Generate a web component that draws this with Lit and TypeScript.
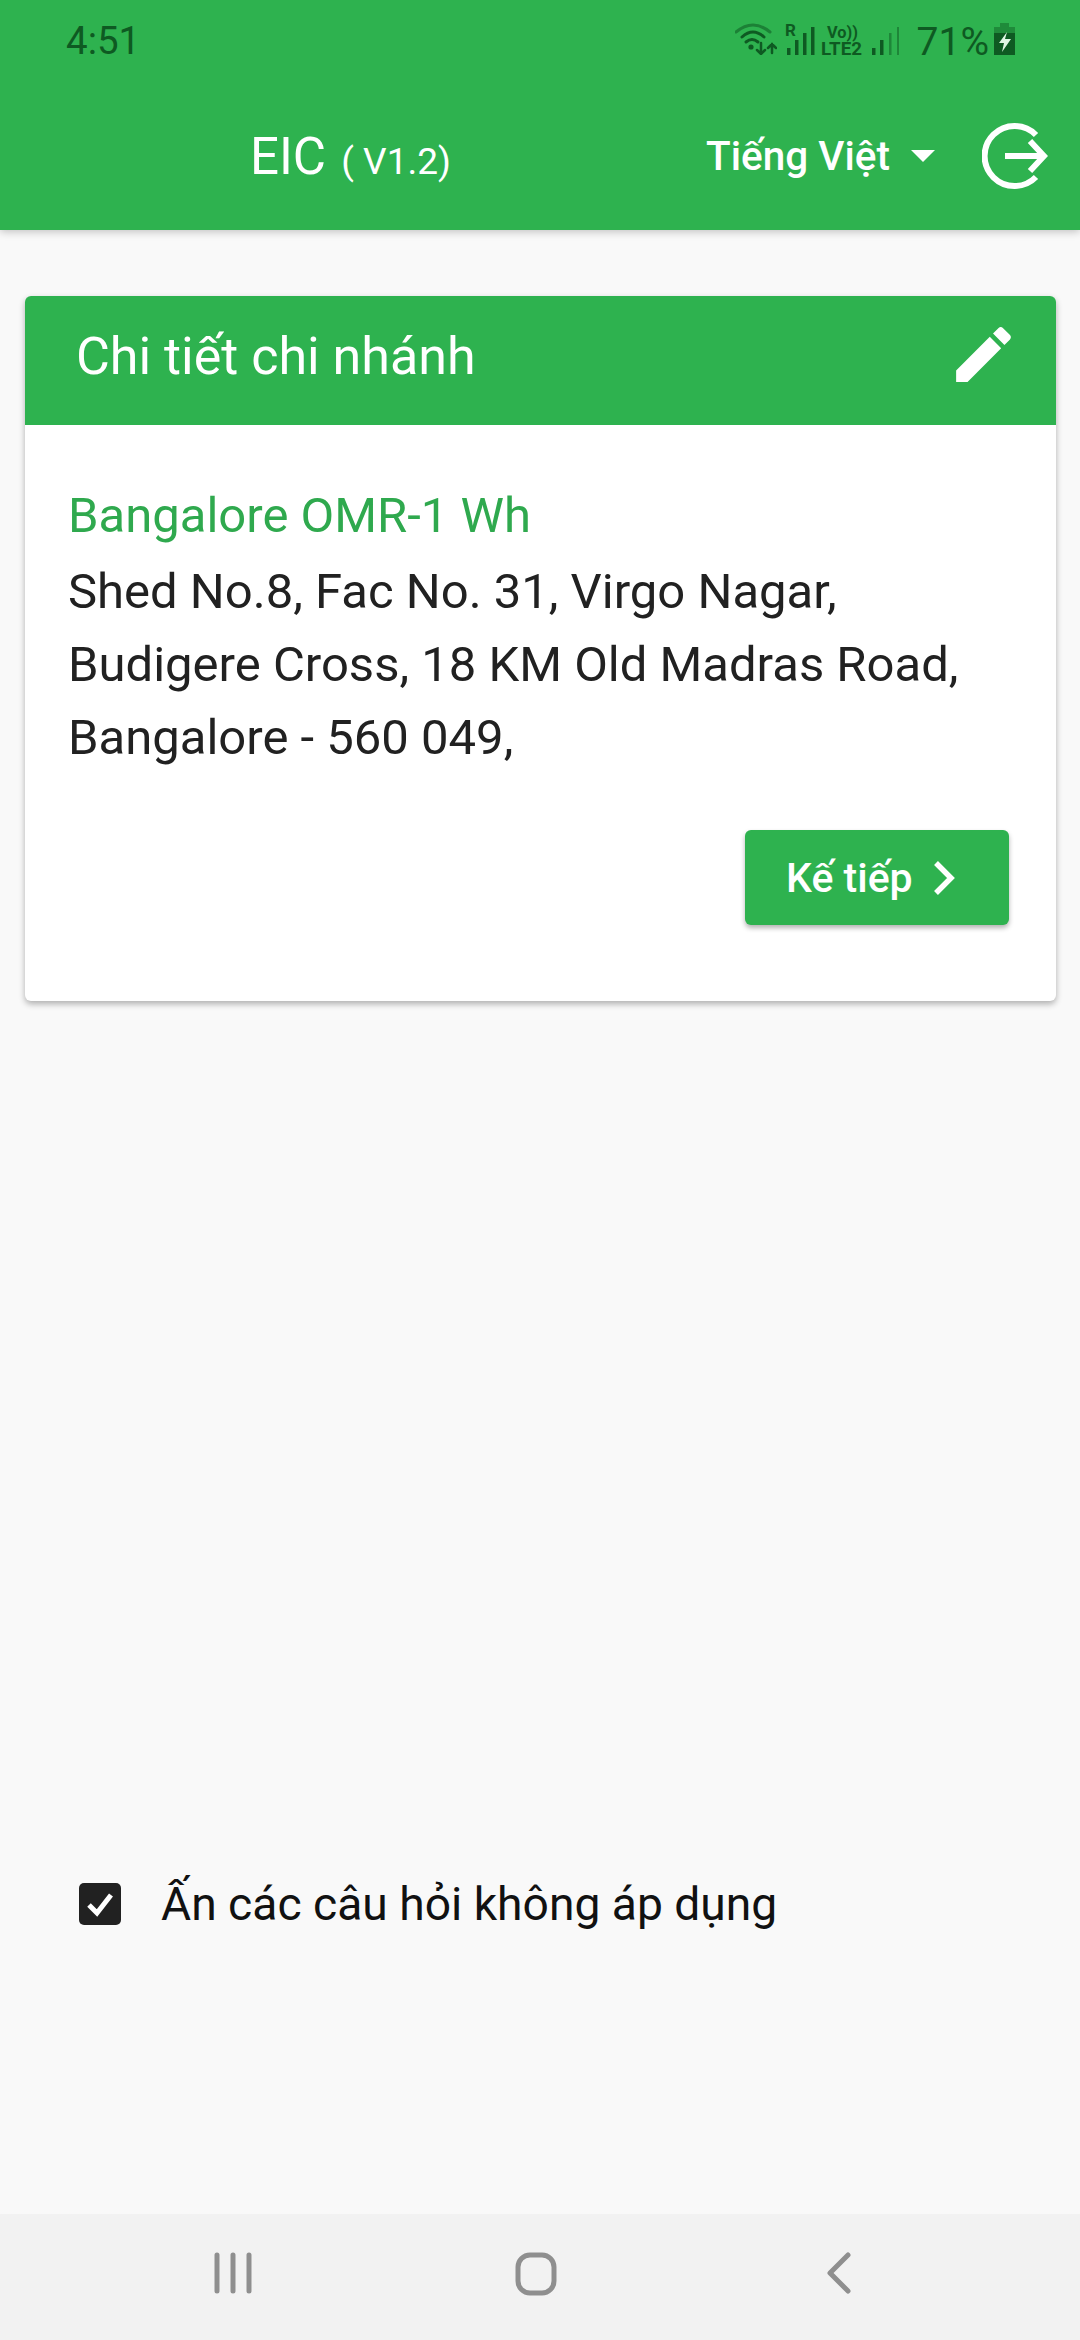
import { LitElement, html, css } from "lit";
import { customElement } from "lit/decorators.js";

@customElement("app-root")
export class AppRoot extends LitElement {
  static styles = css`
    :host { display: block; width: 1080px; height: 2340px; font-family: Roboto, "Liberation Sans", sans-serif; background: #f9f9f9; }
    * { box-sizing: border-box; }
    .page { height: 2340px; display: flex; flex-direction: column; }
    .top { height: 230px; background: #2eb24f; box-shadow: 0 2px 8px rgba(0,0,0,.22); display: flex; flex-direction: column; position: relative; }
    .status { height: 82px; display: flex; align-items: center; padding: 0 65px 0 66px; color: #0e5a22; }
    .time { font-size: 38.5px; line-height: 82px; }
    .sicons { margin-left: auto; margin-bottom: 4px; height: 32px; display: flex; align-items: flex-end; }
    .sicons svg { display: block; flex: none; }
    .sicons svg.tall { margin-bottom: -5px; }
    .wifi { margin-right: 8px; }
    .sicons svg.lte { margin-left: 4px; margin-right: 9px; }
    .pct { font-size: 39px; line-height: 32px; margin: 0 5px -3px 18px; white-space: nowrap; }
    .bar { height: 148px; display: flex; align-items: center; color: #fff; padding: 0 32px 0 250px; }
    .title { font-size: 51px; white-space: nowrap; }
    .ver { font-size: 37px; margin-left: 6px; }
    .lang { margin-left: auto; font-size: 40.5px; font-weight: 500; display: flex; align-items: center; }
    .caret { margin-left: 21px; width: 0; height: 0; border-left: 12px solid transparent; border-right: 12px solid transparent; border-top: 12px solid #fff; }
    .logout { margin-left: 47px; display: block; }
    .main { flex: 1; padding: 66px 24px 0 25px; display: flex; flex-direction: column; }
    .card { background: #fff; border-radius: 6px; box-shadow: 0 3px 6px rgba(0,0,0,.3); height: 705px; overflow: hidden; }
    .chead { height: 129px; background: #2eb24f; display: flex; align-items: center; justify-content: space-between; padding: 0 36px 8px 51px; color: #fff; font-size: 52px; }
    .pencil { display: block; margin-bottom: 4px; }
    .cbody { padding: 51px 43px 0; }
    .name { color: #2fa94e; font-size: 49px; line-height: 79px; }
    .addr { color: #212121; font-size: 49px; line-height: 73px; white-space: nowrap; }
    .actions { display: flex; justify-content: flex-end; margin-top: 56px; padding-right: 4px; }
    .btn { width: 264px; height: 95px; background: #2eb24f; color: #fff; border-radius: 6px; box-shadow: 0 3px 5px rgba(0,0,0,.3); display: flex; align-items: center; padding-left: 41px; font-size: 41px; font-weight: 500; gap: 19px; }
    .check { margin-top: 876px; padding-left: 54px; display: flex; align-items: center; gap: 40px; font-size: 46.2px; color: #111; }
    .box { width: 42px; height: 42px; background: #212121; border-radius: 5px; display: flex; align-items: center; justify-content: center; }
    .nav { height: 126px; background: #f2f2f2; display: flex; }
    .nav svg { display: block; margin-top: 38px; }
    .home { margin-left: 261px; }
    .back { margin-left: 267px; }
    .recents { margin-left: 214px; }
  `;

  render() {
    return html`<div class="page">
      <div class="top">
        <div class="status">
          <span class="time">4:51</span>
          <div class="sicons">
            <svg class="wifi" width="42" height="32" viewBox="0 0 42 32" fill="none" stroke="#0e5a22" stroke-linecap="round">
              <path d="M1 9 Q18 -5 35 9" stroke-width="3" opacity=".55"/>
              <path d="M7 14 Q18 4 29 14" stroke-width="3"/>
              <path d="M11 19 Q17 14 23 19" stroke-width="3"/>
              <circle cx="16" cy="24" r="2.6" fill="#0e5a22" stroke="none"/>
              <path d="M26 20v11M22 27l4 4 4-4M37 30v-9M33 25l4-4 4 4" stroke-width="2.5"/>
            </svg>
            <svg class="tall" width="32" height="47" viewBox="0 -10 32 47" fill="#0e5a22">
              <text x="0" y="13" font-family="Roboto" font-size="17" font-weight="700">R</text>
              <rect x="2" y="25" width="3.5" height="7"/><rect x="10" y="17" width="3.5" height="15"/><rect x="18" y="10" width="3.5" height="22"/><rect x="26" y="4" width="3.5" height="28"/>
            </svg>
            <svg class="tall lte" width="42" height="47" viewBox="0 -10 42 47" fill="#0e5a22">
              <text x="6" y="15" font-family="Roboto" font-size="17" font-weight="700" textLength="31" lengthAdjust="spacingAndGlyphs">Vo))</text>
              <text x="0" y="32" font-family="Roboto" font-size="18" font-weight="700" textLength="41" lengthAdjust="spacingAndGlyphs">LTE2</text>
            </svg>
            <svg width="27" height="32" viewBox="0 0 27 32" fill="#0e5a22">
              <rect x="0" y="25" width="3.5" height="7"/><rect x="8" y="17" width="3.5" height="15"/><rect x="17" y="10" width="2.5" height="22" opacity=".5"/><rect x="25" y="4" width="2" height="28" opacity=".5"/>
            </svg>
            <span class="pct">71%</span>
            <svg width="21" height="32" viewBox="0 0 21 32">
              <rect x="6" y="0" width="9" height="4" fill="#0e5a22" opacity=".45"/>
              <rect x="0" y="4" width="21" height="6" fill="#0e5a22" opacity=".45"/>
              <rect x="0" y="10" width="21" height="22" fill="#0e5a22"/>
              <path d="M13 9 L5 20 H10 L8 29 L17 16 H11 Z" fill="#dff5e3"/>
            </svg>
          </div>
        </div>
        <div class="bar">
          <span class="title">EIC<span class="ver"> ( V1.2)</span></span>
          <span class="lang">Tiếng Việt<span class="caret"></span></span>
          <svg class="logout" width="66" height="66" viewBox="0 0 66 66" fill="none" stroke="#fff" stroke-width="6">
            <path d="M54 12 A30 30 0 1 0 54 54"/>
            <path d="M23 33 H62 M48 18 L62 33 L48 48"/>
          </svg>
        </div>
      </div>
      <div class="main">
        <div class="card">
          <div class="chead">
            <span>Chi tiết chi nhánh</span>
            <svg class="pencil" width="73" height="73" viewBox="0 0 24 24" fill="#fff"><path d="M3 17.25V21h3.75L17.81 9.94l-3.75-3.75L3 17.25zM20.71 7.04c.39-.39.39-1.02 0-1.41l-2.34-2.34c-.39-.39-1.02-.39-1.41 0l-1.83 1.83 3.75 3.75 1.83-1.83z"/></svg>
          </div>
          <div class="cbody">
            <div class="name">Bangalore OMR-1 Wh</div>
            <div class="addr">Shed No.8, Fac No. 31, Virgo Nagar,<br>Budigere Cross, 18 KM Old Madras Road,<br>Bangalore - 560 049,</div>
            <div class="actions">
              <div class="btn"><span>Kế tiếp</span>
                <svg width="24" height="36" viewBox="0 0 24 36" fill="none" stroke="#fff" stroke-width="5.5"><path d="M4 3 L19 18 L4 33"/></svg>
              </div>
            </div>
          </div>
        </div>
        <div class="check">
          <span class="box"><svg width="30" height="30" viewBox="0 0 30 30" fill="none" stroke="#fff" stroke-width="5"><path d="M4 16 L12 24 L26 6"/></svg></span>
          <span>Ấn các câu hỏi không áp dụng</span>
        </div>
      </div>
      <div class="nav">
        <svg class="recents" width="40" height="42" viewBox="0 0 40 42" fill="none" stroke="#8f8f8f" stroke-width="5" stroke-linecap="round"><path d="M3 3V39M19 3V39M35 3V39"/></svg>
        <svg class="home" width="42" height="44" viewBox="0 0 42 44" fill="none" stroke="#8f8f8f" stroke-width="5"><rect x="3" y="3" width="36" height="38" rx="12"/></svg>
        <svg class="back" width="28" height="42" viewBox="0 0 28 42" fill="none" stroke="#8f8f8f" stroke-width="5" stroke-linecap="round" stroke-linejoin="round"><path d="M24 3 L6 21 L24 39"/></svg>
      </div>
    </div>`;
  }
}
